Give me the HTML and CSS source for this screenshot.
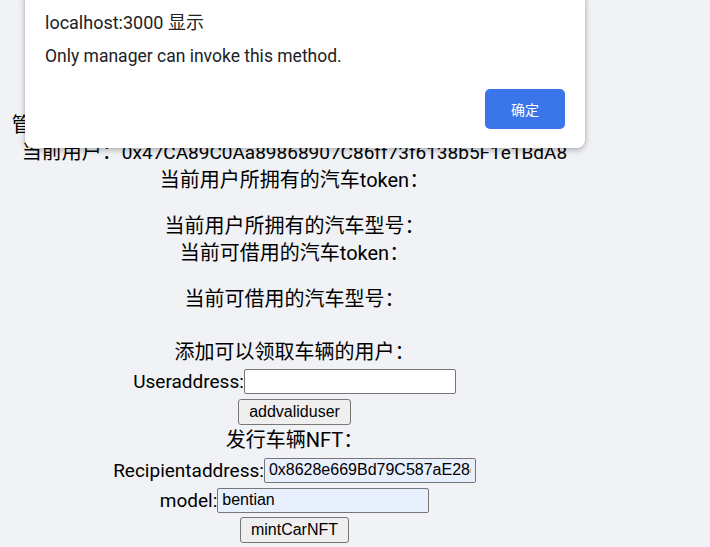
FILE: index.html
```html
<!DOCTYPE html>
<html lang="zh-CN">
<head>
<meta charset="utf-8">
<title>Car NFT</title>
<link rel="stylesheet" href="styles.css">
</head>
<body>
<div class="app">
  <p class="line">管理员地址：<span class="addr">0x47CA89C0Aa89868907C86ff73f6138b5F1e1BdA8</span></p>
  <p class="line">当前用户：<span class="addr">0x47CA89C0Aa89868907C86ff73f6138b5F1e1BdA8</span></p>
  <div class="block first">
    <p class="line">当前用户所拥有的汽车token：</p>
    <ul class="list"></ul>
    <p class="line">当前用户所拥有的汽车型号：</p>
  </div>
  <div class="block">
    <p class="line">当前可借用的汽车token：</p>
    <ul class="list"></ul>
    <p class="line">当前可借用的汽车型号：</p>
  </div>
  <div class="block form-block">
    <p class="line">添加可以领取车辆的用户：</p>
    <div class="row"><label class="label">Useraddress:</label><input class="field" type="text"></div>
    <div class="row btn-row"><button class="btn">addvaliduser</button></div>
    <p class="line">发行车辆NFT：</p>
    <div class="row second"><label class="label">Recipientaddress:</label><input class="field filled" type="text" value="0x8628e669Bd79C587aE28c4A2F6B1E7d93a51C0f2"></div>
    <div class="row"><label class="label">model:</label><input class="field filled" type="text" value="bentian"></div>
    <div class="row"><button class="btn">mintCarNFT</button></div>
  </div>
</div>

<div class="dialog">
  <div class="dialog-title">localhost:3000 显示</div>
  <div class="dialog-msg">Only manager can invoke this method.</div>
  <div class="dialog-actions"><button class="dialog-btn">确定</button></div>
</div>
</body>
</html>
```
FILE: styles.css
```css
html, body {
  margin: 0;
  padding: 0;
  background: #f0f2f5;
}
body {
  font-family: Roboto, "Noto Sans CJK SC", sans-serif;
  font-size: 20px;
  color: #000;
}
.app {
  width: 573px;
  margin-left: 8px;
  padding-top: 112px;
  text-align: center;
}
.line {
  margin: 0;
  height: 27px;
  line-height: 27px;
  white-space: nowrap;
}
.addr {
  font-size: 19px;
}
.list {
  margin: 0;
  padding: 0;
  height: 19px;
  list-style: none;
}
.block.first {
  margin-top: 1px;
}
.block.form-block {
  margin-top: 26px;
}
.row {
  height: 30px;
  display: flex;
  justify-content: center;
  align-items: center;
}
.row.btn-row {
  height: 31px;
}
.row.second {
  margin-top: 1px;
}
.label {
  font-size: 19px;
  white-space: nowrap;
}
.field {
  box-sizing: border-box;
  width: 212px;
  height: 25px;
  margin: 0;
  padding: 1px 4px;
  border: 1px solid #767676;
  border-radius: 2px;
  background: #fff;
  font-family: "Liberation Sans", Arial, sans-serif;
  font-size: 16px;
  color: #000;
  outline: none;
}
.field.filled {
  background: #e8f0fe;
}
.btn {
  box-sizing: border-box;
  height: 26px;
  margin: 0;
  padding: 0 10px;
  border: 1px solid #767676;
  border-radius: 3px;
  background: #efefef;
  font-family: "Liberation Sans", Arial, sans-serif;
  font-size: 16px;
  color: #000;
}
.dialog {
  position: absolute;
  left: 25px;
  top: -10px;
  width: 560px;
  height: 158px;
  box-sizing: border-box;
  padding: 20px 20px 0 20px;
  background: #fff;
  border-radius: 8px;
  box-shadow: 0 2px 6px rgba(0, 0, 0, 0.28), 0 0 2px rgba(0, 0, 0, 0.12);
  font-family: Roboto, "Noto Sans CJK SC", sans-serif;
  color: #202124;
}
.dialog-title {
  font-size: 18px;
  line-height: 24px;
  margin-top: 1px;
}
.dialog-msg {
  font-size: 17.5px;
  line-height: 22px;
  margin-top: 10px;
}
.dialog-actions {
  display: flex;
  justify-content: flex-end;
  margin-top: 22px;
}
.dialog-btn {
  width: 80px;
  height: 40px;
  border: none;
  border-radius: 5px;
  background: #3a76e9;
  color: #fff;
  font-family: "Noto Sans CJK SC", sans-serif;
  font-size: 14px;
}
```
